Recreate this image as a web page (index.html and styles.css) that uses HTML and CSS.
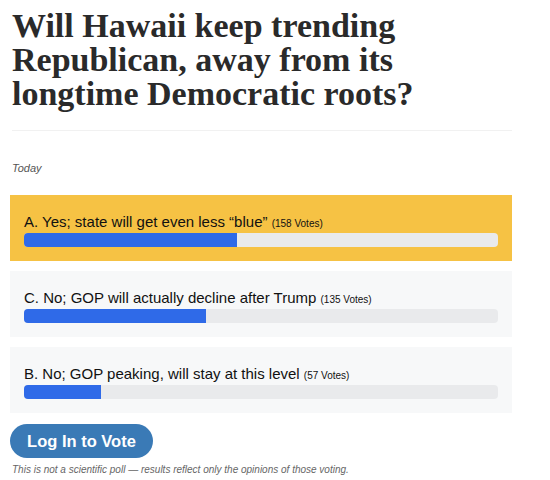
FILE: index.html
```html
<!DOCTYPE html>
<html lang="en">
<head>
  <meta charset="UTF-8" />
  <meta name="viewport" content="width=device-width, initial-scale=1.0"/>
  <title>Hawaii Poll</title>
  <link rel="stylesheet" href="styles.css">
</head>
<body>

  <div class="poll">
    <h1 class="poll-title">Will Hawaii keep trending Republican, away from its longtime Democratic roots?</h1>
    <hr class="poll-rule">
    <p class="poll-date">Today</p>

    <div class="answers">
      <div class="answer leading">
        <div class="answer-label">A. Yes; state will get even less &ldquo;blue&rdquo; <span class="votes">(158 Votes)</span></div>
        <div class="track"><div class="fill" style="width: 45%"></div></div>
      </div>
      <div class="answer">
        <div class="answer-label">C. No; GOP will actually decline after Trump <span class="votes">(135 Votes)</span></div>
        <div class="track"><div class="fill" style="width: 38.5%"></div></div>
      </div>
      <div class="answer">
        <div class="answer-label">B. No; GOP peaking, will stay at this level <span class="votes">(57 Votes)</span></div>
        <div class="track"><div class="fill" style="width: 16.3%"></div></div>
      </div>
    </div>

    <button class="vote-btn" type="button">Log In to Vote</button>
    <p class="disclaimer">This is not a scientific poll &mdash; results reflect only the opinions of those voting.</p>
  </div>

</body>
</html>
```

FILE: styles.css
```css
body {
  margin: 0;
  background: #fff;
  color: #222;
  font-family: 'Liberation Sans', Arial, sans-serif;
}

.poll {
  width: 502px;
  padding: 0 10px;
}

.poll-title {
  font-family: 'Liberation Serif', 'Times New Roman', serif;
  font-weight: bold;
  font-size: 34px;
  line-height: 34px;
  color: #2a2a2a;
  margin: 9px 0 0 2px;
}

.poll-rule {
  border: none;
  border-top: 1px solid #f1f1f1;
  margin: 19px 0 0 2px;
}

.poll-date {
  font-style: italic;
  font-size: 11px;
  color: #555;
  margin: 31px 0 0 2px;
}

.answers {
  display: flex;
  flex-direction: column;
  gap: 10px;
  margin-top: 21px;
}

.answer {
  background: #f7f8f9;
  padding: 17px 14px 14px;
}

.answer.leading {
  background: #f6c244;
}

.answer-label {
  font-size: 15px;
  line-height: 20px;
  height: 20px;
  color: #111;
}

.votes {
  font-size: 10px;
  line-height: 1;
}

.track {
  margin-top: 1px;
  height: 14px;
  background: #e9eaec;
  border-radius: 4px;
  overflow: hidden;
}

.fill {
  height: 100%;
  background: #2f6ae8;
}

.vote-btn {
  margin-top: 11px;
  width: 143px;
  height: 34px;
  border: none;
  border-radius: 17px;
  background: #3a7ab6;
  color: #fff;
  font-family: 'Liberation Sans', Arial, sans-serif;
  font-weight: bold;
  font-size: 16.5px;
  cursor: pointer;
}

.disclaimer {
  font-style: italic;
  font-size: 10px;
  color: #666;
  margin: 6px 0 0 2px;
}
```
